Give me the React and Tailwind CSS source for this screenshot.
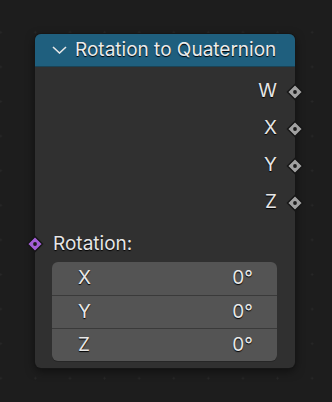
import React from "react";

const font = { fontFamily: "Inter, 'Noto Sans', sans-serif" };

function Socket({ color = "#a1a1a1", className = "" }) {
  return (
    <svg width="18" height="18" viewBox="0 0 18 18" className={className}>
      <path d="M9 1.5 L16.5 9 L9 16.5 L1.5 9 Z" fill={color} stroke="#141414" strokeWidth="1.4" />
      <circle cx="9" cy="9" r="1.9" fill="#1b1b1b" />
    </svg>
  );
}

function OutRow({ label }) {
  return (
    <div className="relative h-[37px] flex items-center justify-end pr-[18px]">
      <span className="text-[19px] text-[#e6e6e6] [text-shadow:0_1px_1px_#000]">{label}</span>
      <Socket className="absolute right-[-9px] top-1/2 -translate-y-1/2" />
    </div>
  );
}

function FieldRow({ label, value, border }) {
  return (
    <div className={`h-[33px] flex items-center justify-between pl-[26px] pr-[24px] ${border ? "border-t border-[#3a3a3a]" : ""}`}>
      <span className="text-[19px] text-[#e8e8e8] [text-shadow:0_1px_1px_#000]">{label}</span>
      <span className="text-[19px] text-[#e8e8e8] [text-shadow:0_1px_1px_#000]">{value}</span>
    </div>
  );
}

export default function App() {
  return (
    <div
      className="w-[332px] h-[402px] bg-[#1d1d1d] pl-[35px] pt-[34px] overflow-hidden bg-[radial-gradient(circle,#282828_0.9px,transparent_1.2px)] bg-[length:34.6px_34.6px] bg-[position:-16.5px_15px]"
      style={font}
    >
      <div className="w-[260px] h-[334px] rounded-[6px] bg-[#303030] shadow-[0_0_0_1px_#161616,0_3px_10px_rgba(0,0,0,0.5)] flex flex-col">
        <div className="h-[33px] rounded-t-[6px] bg-[#1f5f7e] flex items-center pl-[17px] border-b border-[#1a4356]">
          <svg width="15" height="8" viewBox="0 0 15 8" className="mr-[8px]">
            <path d="M1 1 L7.5 7 L14 1" fill="none" stroke="#e6e6e6" strokeWidth="1.6" />
          </svg>
          <span className="text-[19px] text-[#ececec] [text-shadow:0_1px_1px_#000]">Rotation to Quaternion</span>
        </div>
        <div className="pt-[6px] flex flex-col">
          <OutRow label="W" />
          <OutRow label="X" />
          <OutRow label="Y" />
          <OutRow label="Z" />
        </div>
        <div className="relative mt-[5px] h-[36px] flex items-center pl-[18px]">
          <Socket color="#a35ed6" className="absolute left-[-9px] top-1/2 -translate-y-1/2" />
          <span className="text-[19px] text-[#e6e6e6] [text-shadow:0_1px_1px_#000]">Rotation:</span>
        </div>
        <div className="mx-[17px] mr-[18px] rounded-[6px] bg-[#545454] overflow-hidden shadow-[0_1px_0_#262626]">
          <FieldRow label="X" value="0°" />
          <FieldRow label="Y" value="0°" border />
          <FieldRow label="Z" value="0°" border />
        </div>
      </div>
    </div>
  );
}
